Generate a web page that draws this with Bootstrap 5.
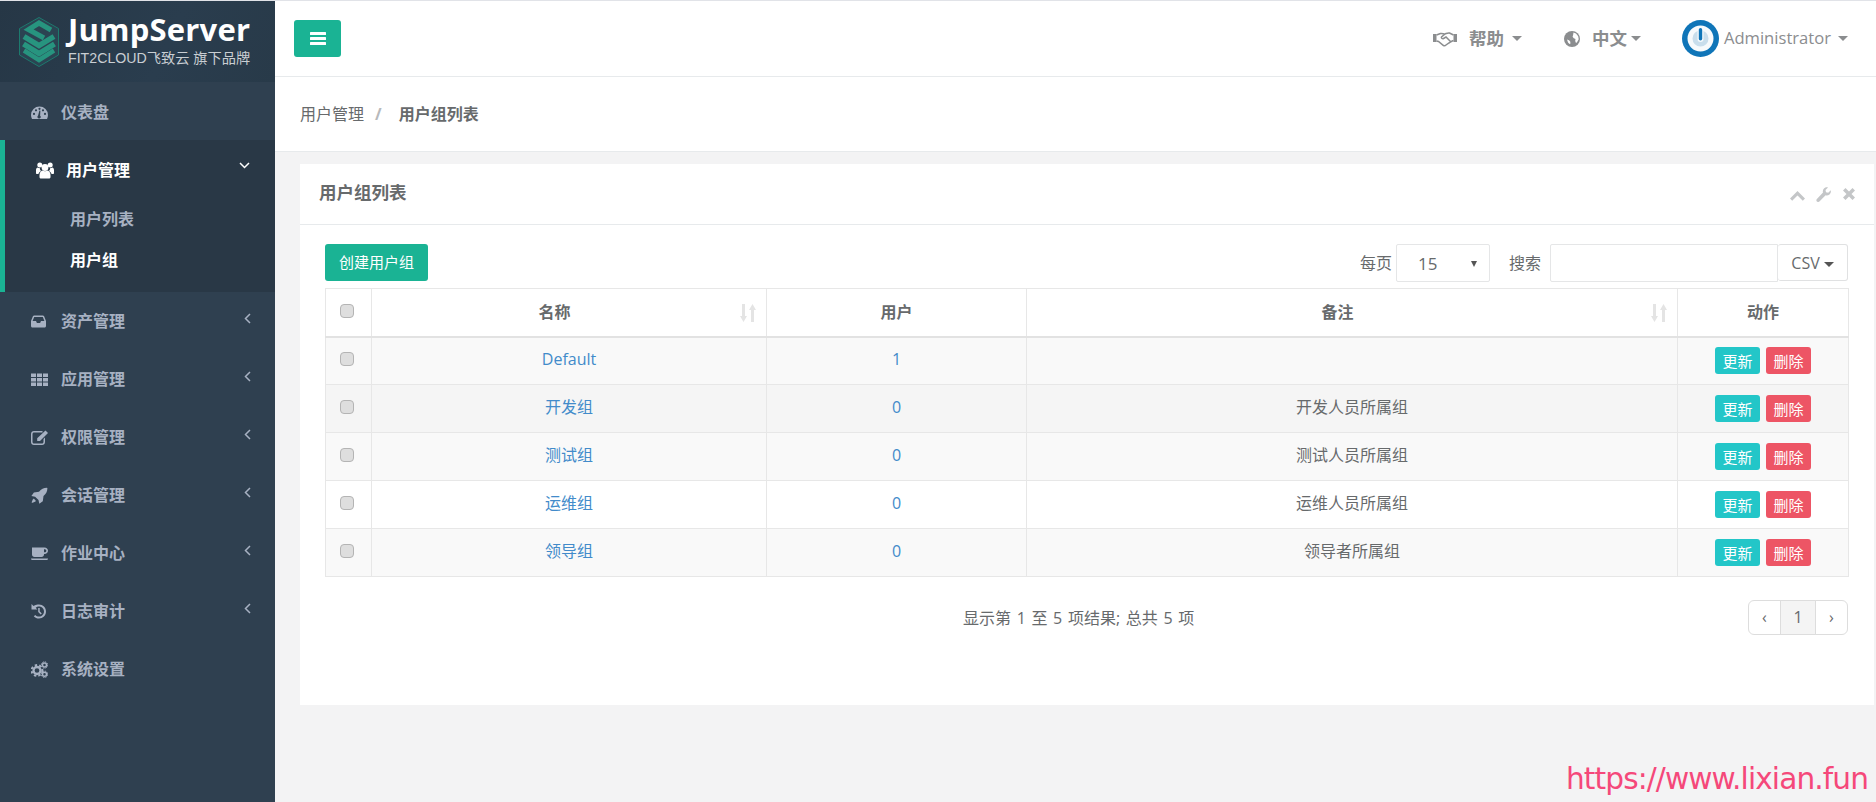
<!DOCTYPE html>
<html lang="zh-CN">
<head>
<meta charset="utf-8">
<title>用户组列表</title>
<link href="https://cdn.jsdelivr.net/npm/bootstrap@5.3.0/dist/css/bootstrap.min.css" rel="stylesheet">
<style>
html,body{height:100%}
body{background:#f3f3f4;color:#676a6c;font-family:"Open Sans","Noto Sans CJK SC",sans-serif;font-size:16px;overflow:hidden;border-top:1px solid #e1e3e8}
.app{height:801px}
.side{width:275px;flex:none;background:#2f4050;color:#a7b1c2}
.logo-box{height:81px;background:linear-gradient(115deg,#263746 0%,#2a3d4e 60%,#283a49 100%);padding-left:19px;gap:9px}
.logo-text{margin-top:-3px}
.logo-name{font-family:"Open Sans",sans-serif;font-weight:700;font-size:31px;line-height:33px;color:#fff;letter-spacing:.2px;margin-bottom:4px}
.logo-sub{font-family:"Liberation Sans","Noto Sans CJK SC",sans-serif;font-size:14.2px;line-height:17px;color:#c9ced3;white-space:nowrap}
.side-link{height:58px;padding-left:31px;color:#a7b1c2;font-weight:600;text-decoration:none}
.side-link:hover{color:#a7b1c2}
.dash-link{padding-top:2px}
.ico{width:17px;height:17px;flex:none;margin-right:13px;fill:currentColor}
.ico-users{width:18px;margin-right:12px}
.ang{width:7px;height:11px;margin-left:auto;margin-right:24px;margin-top:-6px;fill:none;stroke:currentColor;stroke-width:1.5}
.side-open{background:#293846;border-left:5px solid #1ab394;padding-bottom:12px;padding-top:1px}
.side-open .side-link{color:#fff}
.side-open .ang{width:11px;height:7px;margin-right:25px;margin-top:-10px}
.sub-link{height:41px;padding-left:65px;color:#a7b1c2;font-weight:600;text-decoration:none}
.sub-first{margin-top:-1px}
.sub-on{color:#fff}
.main-col{min-width:0}
.topbar{height:76px;background:#fff;border-bottom:1px solid #e7eaec;padding:0 28px 0 19px}
.menu-btn{width:47px;height:37px;background:#1ab394;border-radius:3px;margin-top:-1px}
.top-item{font-weight:700;font-size:17.5px;color:#8b8d8f}
.top-help svg{margin-right:12px}
.top-lang{margin-left:42px}
.top-lang svg{margin-right:12px}
.crt{display:inline-block;width:0;height:0;border-left:5px solid transparent;border-right:5px solid transparent;border-top:5px solid currentColor}
.top-item svg{fill:currentColor}
.admin{font-weight:400;font-size:16.6px;color:#8b8d8f;margin-left:41px}
.admin svg{margin-right:5px}
.admin .crt{margin-left:7px}
.crumbs{height:75px;background:#fff;border-bottom:1px solid #e7eaec;padding-left:25px}
.crumbs .breadcrumb{margin:0;font-size:16px;--bs-breadcrumb-divider-color:#b7b9bb;--bs-breadcrumb-item-padding-x:11px;--bs-breadcrumb-item-active-color:#676a6c}
.crumbs .breadcrumb-item.active{font-weight:700;padding-left:11px}
.crumbs .breadcrumb-item.active::before{padding-right:17px}
.panel{margin:12px 2px 0 25px;height:541px;background:#fff;border:0;border-radius:0}
.panel-head{height:61px;background:#fff;border-bottom:1px solid #e7eaec;padding:0 19px 0 19px;border-radius:0!important}
.panel-title{font-size:17.5px;font-weight:700;color:#676a6c;margin-top:-4px}
.tools{fill:#c4c6c8}
.tool-up{margin-right:11px;margin-top:4px}
.tool-wrench{margin-right:12px}
.panel-body{padding:19px 26px 0 25px}
.bar{height:38px;margin-bottom:6px}
.btn-make{background:#1ab394;color:#fff;font-size:15px;height:37px;width:103px;padding:0;border-radius:3px;border:0}
.btn-make:hover{background:#1ab394;color:#fff}
.pick{width:94px;height:38px;border:1px solid #e5e6e7;border-radius:2px;background:#fff;padding:2px 12px 0 21px;font-size:17px;color:#676a6c;margin-left:4px;margin-right:19px}
.pick-arrow{border-left:3.5px solid transparent;border-right:3.5px solid transparent;border-top:6px solid #555;width:0;height:0}
.find{width:228px;height:38px;border:1px solid #e5e6e7;border-radius:2px 0 0 2px;margin-left:9px}
.csv{width:70px;height:37px;border:1px solid #e0e1e2;border-radius:3px;background:#fff;color:#676a6c;font-size:16px;padding:0;border-left:0;margin-top:-1px}
.csv .crt{margin-left:4px;vertical-align:2px;color:#555}
.grid-t{width:1523px;table-layout:fixed;margin:0;--bs-table-border-color:#e7e7e7;color:#676a6c}
.grid-t>*{--bs-table-color:#676a6c}
.grid-t th,.grid-t td{padding:0;text-align:center;vertical-align:middle;border-color:#e7e7e7;position:relative}
.grid-t thead th{height:48px;font-weight:700;font-size:16px;border-bottom:2px solid #e2e2e2;background:#fff}
.grid-t tbody td{height:48px;font-size:16px}
.grid-t tbody td.txt{padding-bottom:3px}
.grid-t th:first-child,.grid-t td:first-child{padding-right:3px}
.grid-t th.has-sort{padding-right:29px}
.r-a td{background:#f9f9f9}
.r-b td{background:#f5f5f5}
.r-c td{background:#fff}
.grid-t a{color:#428bca;text-decoration:none}
.tick{width:14px;height:14px;margin:0 auto 3px;background-color:#dedede;border:1px solid #b4b4b4;border-radius:3px;display:block}
.sort-i{position:absolute;right:10px;top:15px;width:16px;height:18px;fill:#e4e4e4}
.act{height:27px;width:45px;padding:0;font-size:15px;line-height:26px;border:0;border-radius:3px;color:#fff;vertical-align:middle}
.act:hover{color:#fff}
.act-up{background:#23c6c8;margin-right:6px}
.act-up:hover{background:#23c6c8}
.act-del{background:#ed5565}
.act-del:hover{background:#ed5565}
.foot{margin-top:23px;height:35px}
.foot-info{margin-left:638px;font-size:16px;word-spacing:1.5px;margin-top:1px;white-space:nowrap}
.pager{margin:0 0 0 auto;--bs-pagination-color:#676a6c;--bs-pagination-border-color:#ddd;--bs-pagination-font-size:16px}
.pager .page-link{height:35px;width:33px;padding:0;line-height:33px;text-align:center;color:#676a6c}
.pager .pg-on{width:36px;background:#f4f4f4}
.mark-url{position:absolute;right:8px;bottom:0;font-family:"DejaVu Sans",sans-serif;font-size:29.6px;line-height:45px;color:#f5487a;letter-spacing:-.9px;white-space:nowrap}
</style>
</head>
<body class="position-relative">
<div class="app d-flex">
  <aside class="side d-flex flex-column">
    <div class="logo-box d-flex align-items-center">
      <svg width="40" height="50" viewBox="0 0 40 50" fill="none"><path d="M20 .5 39.500 11.500V38L20 49.500.5 38V11.500Z" fill="#2b4452" stroke="#1d7a6e"/><g stroke="#27947f" stroke-width="5" stroke-linejoin="miter"><path d="M32 13 20 6 9.500 12.500 25 21"/><path d="M5 19.500 20 28.500l15-9" stroke-width="5.500"/><path d="M4.500 27 20 36.500 35.500 27" stroke-width="5.500"/><path d="M5 33.500 20 43l15-9.500" stroke-width="4.500"/></g></svg>
      <div class="logo-text">
        <div class="logo-name">JumpServer</div>
        <div class="logo-sub">FIT2CLOUD飞致云 旗下品牌</div>
      </div>
    </div>
    <ul class="nav flex-column flex-nowrap">
      <li class="nav-item"><a class="side-link dash-link d-flex align-items-center" href="#">
        <svg class="ico" viewBox="0 0 17 17"><path fill-rule="evenodd" d="M8.500 2.500A8.500 8.500 0 0 0 0 11c0 1.500.4 2.800 1 4h15c.6-1.200 1-2.500 1-4a8.500 8.500 0 0 0-8.500-8.500ZM3 11a1.100 1.100 0 1 1 0-2.200A1.100 1.100 0 0 1 3 11Zm2-3.600a1.100 1.100 0 1 1 0-2.200 1.100 1.100 0 0 1 0 2.200Zm3.500-1.500a1.100 1.100 0 1 1 0-2.200 1.100 1.100 0 0 1 0 2.200ZM9.800 13a1.700 1.700 0 1 1-2.700-1.500l1.300-5 1 .2-.3 5.100c.4.300.7.700.7 1.200ZM14 11a1.100 1.100 0 1 1 0-2.200A1.100 1.100 0 0 1 14 11Zm-2-3.600a1.100 1.100 0 1 1 0-2.200 1.100 1.100 0 0 1 0 2.200Z"/></svg>仪表盘</a></li>
      <li class="nav-item side-open">
        <a class="side-link d-flex align-items-center" href="#">
          <svg class="ico ico-users" viewBox="0 0 18 17"><circle cx="9" cy="5.500" r="3.400"/><circle cx="3.800" cy="3" r="2.500"/><circle cx="14.200" cy="3" r="2.500"/><path d="M3.500 13c0-3 2-4.500 3-4.500.7.400 1.600.7 2.500.7s1.800-.3 2.500-.7c1 0 3 1.500 3 4.500v2c0 1-.8 1.500-1.800 1.500H5.300c-1 0-1.800-.5-1.800-1.500Z"/><path d="M0 8c0-1.500 1-2.300 1.500-2.500.6.400 1.300.6 2 .6h.3c-.1 1.200.4 2.200 1.200 2.800C3.500 9.700 2.600 11 2.500 12H1c-.6 0-1-.4-1-1Zm18 0c0-1.500-1-2.300-1.500-2.500-.6.400-1.300.6-2 .6h-.3c.1 1.200-.4 2.200-1.200 2.800 1.500.8 2.400 2.100 2.500 3.100H17c.6 0 1-.4 1-1Z"/></svg>用户管理
          <svg class="ang" viewBox="0 0 11 7"><path d="M1 1l4.500 4.500L10 1"/></svg>
        </a>
        <a class="sub-link sub-first d-flex align-items-center" href="#">用户列表</a>
        <a class="sub-link sub-on d-flex align-items-center" href="#">用户组</a>
      </li>
      <li class="nav-item"><a class="side-link d-flex align-items-center" href="#">
        <svg class="ico" viewBox="0 0 17 17"><path fill-rule="evenodd" d="M3.200 2.500h8.600c.6 0 1 .3 1.300.8L15 8v5c0 .9-.6 1.500-1.500 1.500h-12C.6 14.500 0 13.900 0 13V8l1.900-4.700c.3-.5.700-.8 1.300-.8Zm0 1.600L1.600 8H5l.9 1.900h3.200L10 8h3.400l-1.600-3.900Z"/></svg>资产管理
        <svg class="ang" viewBox="0 0 7 11"><path d="M6 1 1.500 5.500 6 10"/></svg></a></li>
      <li class="nav-item"><a class="side-link d-flex align-items-center" href="#">
        <svg class="ico" viewBox="0 0 17 17"><path d="M0 2.500h5v3.500H0zM6 2.500h5v3.500H6zM12 2.500h5v3.500h-5zM0 7h5v3.500H0zM6 7h5v3.500H6zM12 7h5v3.500h-5zM0 11.500h5V15H0zM6 11.500h5V15H6zM12 11.500h5V15h-5z"/></svg>应用管理
        <svg class="ang" viewBox="0 0 7 11"><path d="M6 1 1.500 5.500 6 10"/></svg></a></li>
      <li class="nav-item"><a class="side-link d-flex align-items-center" href="#">
        <svg class="ico" viewBox="0 0 17 17"><path d="M3 2h8.500v1.500H3c-.8 0-1.500.7-1.500 1.500v8c0 .8.700 1.500 1.500 1.500h8c.8 0 1.500-.7 1.500-1.500V10L14 8.500V13c0 1.700-1.300 3-3 3H3c-1.700 0-3-1.300-3-3V5c0-1.700 1.300-3 3-3Z"/><path d="M14.500 1.500 17 4l-8 8H6.200V9.300Z"/></svg>权限管理
        <svg class="ang" viewBox="0 0 7 11"><path d="M6 1 1.500 5.500 6 10"/></svg></a></li>
      <li class="nav-item"><a class="side-link d-flex align-items-center" href="#">
        <svg class="ico" viewBox="0 0 17 17"><path d="M16 .8c.3 0 .4.200.4.500-.1 3.300-1.200 5.600-3.900 7.700l-.7 5.200-3.500 2.500-.8-3.600-3.400-3.400-3.700-.8 2.500-3.500 5.100-.7C10.200 2 12.600.9 16 .8Z"/><path d="M2.800 11.500 5 14c-1.200 1.300-3.200 1.700-4.300 1.800.1-1.200.6-3 2.100-4.300Z"/></svg>会话管理
        <svg class="ang" viewBox="0 0 7 11"><path d="M6 1 1.500 5.500 6 10"/></svg></a></li>
      <li class="nav-item"><a class="side-link d-flex align-items-center" href="#">
        <svg class="ico" viewBox="0 0 17 17"><path fill-rule="evenodd" d="M1 2.500h12.500c2 0 3.500 1.300 3.500 3.200s-1.500 3.300-3.500 3.300H13v.500c0 1.400-1.100 2.500-2.500 2.500h-7C2.100 12 1 10.900 1 9.500Zm12 1.700V7.300h.5c1 0 1.800-.6 1.800-1.600s-.8-1.500-1.800-1.500Z"/><path d="M0 13.500h17c0 1-.8 1.500-1.700 1.500H1.700C.8 15 0 14.500 0 13.500Z"/></svg>作业中心
        <svg class="ang" viewBox="0 0 7 11"><path d="M6 1 1.500 5.500 6 10"/></svg></a></li>
      <li class="nav-item"><a class="side-link d-flex align-items-center" href="#">
        <svg class="ico" viewBox="0 0 17 17"><path d="M8 1.500c3.900 0 7 3.100 7 7s-3.100 7-7 7c-2 0-3.900-.8-5.200-2.300l1.500-1.300c.9 1.100 2.300 1.700 3.700 1.700 2.800 0 5-2.300 5-5.100s-2.200-5-5-5c-1.200 0-2.400.5-3.300 1.200l1.600 1.700H.5V.900l2 2A7 7 0 0 1 8 1.500Z"/><path d="M7.200 5h1.500v3.300l2.100 2.100-1.100 1.100-2.500-2.600Z"/></svg>日志审计
        <svg class="ang" viewBox="0 0 7 11"><path d="M6 1 1.500 5.500 6 10"/></svg></a></li>
      <li class="nav-item"><a class="side-link d-flex align-items-center" href="#">
        <svg class="ico" viewBox="0 0 17 17"><circle cx="6" cy="9.500" r="3.500" fill="none" stroke="currentColor" stroke-width="2.300"/><circle cx="6" cy="9.500" r="5.400" fill="none" stroke="currentColor" stroke-width="2" stroke-dasharray="2.400 2.100"/><circle cx="13.500" cy="4" r="2" fill="none" stroke="currentColor" stroke-width="1.500"/><circle cx="13.500" cy="13.300" r="2" fill="none" stroke="currentColor" stroke-width="1.500"/><circle cx="13.500" cy="4" r="3.200" fill="none" stroke="currentColor" stroke-width="1" stroke-dasharray="1.500 1"/><circle cx="13.500" cy="13.300" r="3.200" fill="none" stroke="currentColor" stroke-width="1" stroke-dasharray="1.500 1"/></svg>系统设置</a></li>
    </ul>
  </aside>
  <div class="main-col flex-grow-1 d-flex flex-column">
    <nav class="topbar d-flex align-items-center">
      <button class="menu-btn btn d-flex align-items-center justify-content-center p-0 border-0" type="button" aria-label="menu">
        <svg width="16" height="13" viewBox="0 0 16 13" fill="#fff"><rect width="16" height="3" rx=".5"/><rect y="5" width="16" height="3" rx=".5"/><rect y="10" width="16" height="3" rx=".5"/></svg>
      </button>
      <div class="ms-auto d-flex align-items-center">
        <div class="top-item top-help d-flex align-items-center">
          <svg width="24" height="16" viewBox="0 0 24 16"><path d="M0 3h3.500v8H0zM20.500 3H24v8h-3.500z"/><path fill="none" stroke="currentColor" stroke-width="1.500" d="M3.500 4l4-1.500c1.500-.5 3 .5 4.500.5 1.500-.5 3-1.500 4.500-1l4 2M3.500 10l2 .5 5 4c1 .5 2 0 2.500-.5l3-2c1-.5 3-2 4.500-2.500M12 3 8.500 6c-.5 1 1 2 2 1.500L13 6l5 5"/></svg>
          <span>帮助</span><span class="crt ms-2"></span>
        </div>
        <div class="top-item top-lang d-flex align-items-center">
          <svg width="16" height="16" viewBox="0 0 16 16"><circle cx="8" cy="8" r="8"/><path fill="#fff" d="M9.500 1.500 12 2.500l2.200 2.800.5 3-1.700 3-1 .7-.8-2 .3-2-1.700-.8-1.200-1.500.5-1.700ZM3 8.500l2 .7 1.200 1.300.3 2-1 .5-1.500-1.500Z"/></svg>
          <span>中文</span><span class="crt ms-1"></span>
        </div>
        <div class="admin d-flex align-items-center">
          <svg width="37" height="37" viewBox="0 0 37 37"><circle cx="18.500" cy="18.500" r="18.500" fill="#0f75b8"/><circle cx="18.500" cy="18.500" r="10.500" fill="#c9deec" stroke="#f7fafc" stroke-width="5"/><rect x="15.500" y="7" width="6" height="15" rx="3" fill="#f7fafc"/><rect x="16.800" y="8" width="3.400" height="12.500" rx="1.700" fill="#0f75b8"/></svg>
          <span>Administrator</span><span class="crt"></span>
        </div>
      </div>
    </nav>
    <div class="crumbs d-flex align-items-center">
      <ol class="breadcrumb">
        <li class="breadcrumb-item">用户管理</li>
        <li class="breadcrumb-item active">用户组列表</li>
      </ol>
    </div>
    <div class="card panel">
      <div class="card-header panel-head d-flex align-items-center">
        <span class="panel-title">用户组列表</span>
        <div class="ms-auto d-flex align-items-center tools">
          <svg class="tool-up" width="15" height="10" viewBox="0 0 15 10"><path d="M7.500 0 15 7.500 12.800 9.700 7.500 4.400 2.200 9.700 0 7.500Z"/></svg>
          <svg class="tool-wrench" width="15" height="15" viewBox="0 0 15 15"><path d="M14.800 3.200c.3 1.700-.2 3.200-1.300 4.200-1.100 1-2.600 1.300-3.900.9L3.400 14.500c-.7.700-1.800.7-2.500 0-.7-.7-.7-1.800 0-2.500L7 5.600C6.500 4.300 6.900 2.700 8 1.600 9 .5 10.500.1 12 .4L9.500 3l.5 2.200 2.200.6Z"/></svg>
          <svg width="12" height="12" viewBox="0 0 12 12"><path d="M2.500 0 6 3.500 9.500 0 12 2.500 8.500 6 12 9.500 9.500 12 6 8.500 2.500 12 0 9.500 3.500 6 0 2.500Z"/></svg>
        </div>
      </div>
      <div class="panel-body">
        <div class="bar d-flex align-items-start">
          <button class="btn btn-make" type="button">创建用户组</button>
          <div class="ms-auto d-flex align-items-center">
            <span>每页</span>
            <div class="pick d-flex align-items-center justify-content-between"><span>15</span><span class="pick-arrow"></span></div>
            <span>搜索</span>
            <input class="find form-control" type="text" aria-label="搜索">
            <button class="csv btn" type="button">CSV<span class="crt"></span></button>
          </div>
        </div>
        <table class="table table-bordered grid-t">
          <colgroup><col style="width:46px"><col style="width:395px"><col style="width:260px"><col style="width:651px"><col style="width:171px"></colgroup>
          <thead><tr>
            <th><input class="form-check-input tick" type="checkbox" aria-label="all"></th>
            <th class="has-sort">名称<svg class="sort-i" viewBox="0 0 16 18"><path d="M2 0h3v12h2L3.500 18 0 12h2ZM9 6l3.500-6L16 6h-2v12h-3V6Z"/></svg></th>
            <th>用户</th>
            <th class="has-sort">备注<svg class="sort-i" viewBox="0 0 16 18"><path d="M2 0h3v12h2L3.500 18 0 12h2ZM9 6l3.500-6L16 6h-2v12h-3V6Z"/></svg></th>
            <th>动作</th>
          </tr></thead>
          <tbody>
            <tr class="r-a"><td><input class="form-check-input tick" type="checkbox" aria-label="select"></td><td class="txt"><a href="#">Default</a></td><td class="txt"><a href="#">1</a></td><td class="txt"></td><td><button class="btn act act-up" type="button">更新</button><button class="btn act act-del" type="button">删除</button></td></tr>
            <tr class="r-b"><td><input class="form-check-input tick" type="checkbox" aria-label="select"></td><td class="txt"><a href="#">开发组</a></td><td class="txt"><a href="#">0</a></td><td class="txt">开发人员所属组</td><td><button class="btn act act-up" type="button">更新</button><button class="btn act act-del" type="button">删除</button></td></tr>
            <tr class="r-a"><td><input class="form-check-input tick" type="checkbox" aria-label="select"></td><td class="txt"><a href="#">测试组</a></td><td class="txt"><a href="#">0</a></td><td class="txt">测试人员所属组</td><td><button class="btn act act-up" type="button">更新</button><button class="btn act act-del" type="button">删除</button></td></tr>
            <tr class="r-c"><td><input class="form-check-input tick" type="checkbox" aria-label="select"></td><td class="txt"><a href="#">运维组</a></td><td class="txt"><a href="#">0</a></td><td class="txt">运维人员所属组</td><td><button class="btn act act-up" type="button">更新</button><button class="btn act act-del" type="button">删除</button></td></tr>
            <tr class="r-a"><td><input class="form-check-input tick" type="checkbox" aria-label="select"></td><td class="txt"><a href="#">领导组</a></td><td class="txt"><a href="#">0</a></td><td class="txt">领导者所属组</td><td><button class="btn act act-up" type="button">更新</button><button class="btn act act-del" type="button">删除</button></td></tr>
          </tbody>
        </table>
        <div class="foot d-flex align-items-center">
          <div class="foot-info">显示第 1 至 5 项结果; 总共 5 项</div>
          <ul class="pagination pager">
            <li class="page-item"><a class="page-link" href="#">‹</a></li>
            <li class="page-item"><a class="page-link pg-on" href="#">1</a></li>
            <li class="page-item"><a class="page-link" href="#">›</a></li>
          </ul>
        </div>
      </div>
    </div>
  </div>
</div>
<div class="mark-url">https://www.lixian.fun</div>
<script src="https://cdn.jsdelivr.net/npm/bootstrap@5.3.0/dist/js/bootstrap.bundle.min.js"></script>
</body>
</html>
